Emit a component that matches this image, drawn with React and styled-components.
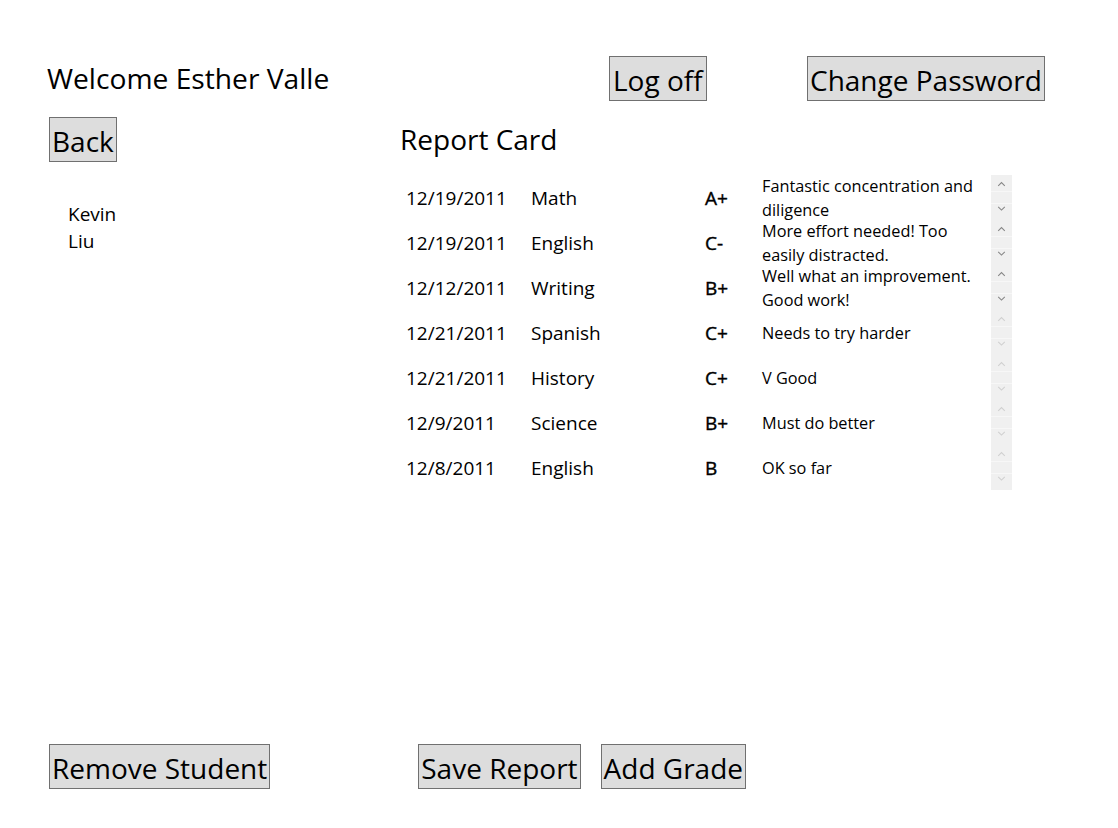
import React from "react";
import styled, { createGlobalStyle } from "styled-components";

const GlobalStyle = createGlobalStyle`
  html, body {
    margin: 0;
    padding: 0;
    background: #ffffff;
  }
  body {
    font-family: "Open Sans", "Noto Sans", sans-serif;
    color: #000000;
  }
`;

const Page = styled.div`
  width: 1118px;
  height: 828px;
  box-sizing: border-box;
  padding: 56px 0 39px 0;
  display: flex;
  flex-direction: column;
`;

const TopBar = styled.div`
  display: grid;
  grid-template-columns: 562px 198px auto;
  align-items: start;
  padding-left: 47px;
`;

const Welcome = styled.h1`
  margin: 0;
  font-size: 28.2px;
  font-weight: 400;
  line-height: 45px;
`;

const Button = styled.button`
  font-family: "Open Sans", "Noto Sans", sans-serif;
  font-size: 28px;
  line-height: 38px;
  height: 45px;
  box-sizing: border-box;
  padding: 3px ${(p) => (p.$wide ? 3 : 2)}px 0;
  background: #dddddd;
  border: 1px solid #707070;
  border-radius: 0;
  color: #000000;
  cursor: pointer;
  justify-self: start;
  white-space: nowrap;
`;

const Main = styled.div`
  display: flex;
  margin-top: 16px;
`;

const LeftPane = styled.div`
  width: 351px;
  padding-left: 49px;
  display: flex;
  flex-direction: column;
  align-items: flex-start;
`;

const StudentList = styled.ul`
  list-style: none;
  margin: 39px 0 0 0;
  padding: 0 0 0 19px;
  width: 60px;
`;

const Student = styled.li`
  font-size: 19px;
  line-height: 27px;
`;

const RightPane = styled.div`
  display: flex;
  flex-direction: column;
`;

const Heading = styled.h2`
  margin: 0 0 13px 0;
  font-size: 28px;
  font-weight: 400;
  line-height: 45px;
`;

const Table = styled.div`
  display: flex;
  flex-direction: column;
  width: 612px;
`;

const Row = styled.div`
  display: grid;
  grid-template-columns: 125px 174px 57px 235px 21px;
  height: 45px;
  align-items: center;
`;

const Cell = styled.div`
  padding-left: 6px;
  font-size: 19px;
  white-space: nowrap;
  -webkit-text-stroke: ${(p) => (p.$strong ? "0.4px #000" : "0")};
`;

const Comment = styled.div`
  height: 45px;
  overflow: hidden;
  display: flex;
  align-items: center;
  padding-left: 6px;
  padding-right: 4px;
  font-size: 16.3px;
  line-height: 24px;
`;

const Scroll = styled.div`
  height: 45px;
  background: #f0f0f0;
  display: flex;
  flex-direction: column;
  justify-content: space-between;
  color: ${(p) => (p.$active ? "#868686" : "#d0d0d0")};
`;

const Arrow = styled.svg`
  width: 21px;
  height: 17px;
  display: block;
  box-sizing: border-box;
  border-bottom: ${(p) => (p.$top ? "1px solid #f7f7f7" : "none")};
  border-top: ${(p) => (p.$top ? "none" : "1px solid #f7f7f7")};
`;

const BottomBar = styled.div`
  margin-top: auto;
  display: flex;
  padding-left: 49px;
`;

const Spacer = styled.div`
  width: ${(p) => p.$w}px;
  flex: none;
`;

const grades = [
  { date: "12/19/2011", subject: "Math", grade: "A+", comment: "Fantastic concentration and diligence", scroll: true },
  { date: "12/19/2011", subject: "English", grade: "C-", comment: "More effort needed! Too easily distracted.", scroll: true },
  { date: "12/12/2011", subject: "Writing", grade: "B+", comment: "Well what an improvement. Good work!", scroll: true },
  { date: "12/21/2011", subject: "Spanish", grade: "C+", comment: "Needs to try harder" },
  { date: "12/21/2011", subject: "History", grade: "C+", comment: "V Good" },
  { date: "12/9/2011", subject: "Science", grade: "B+", comment: "Must do better" },
  { date: "12/8/2011", subject: "English", grade: "B", comment: "OK so far" },
];

function ScrollBar({ active }) {
  return (
    <Scroll $active={active}>
      <Arrow $top viewBox="0 0 21 17">
        <path d="M7 11.5 L10.5 8 L14 11.5" fill="none" stroke="currentColor" strokeWidth="1.1" />
      </Arrow>
      <Arrow viewBox="0 0 21 17">
        <path d="M7 3 L10.5 6.5 L14 3" fill="none" stroke="currentColor" strokeWidth="1.1" />
      </Arrow>
    </Scroll>
  );
}

export default function App() {
  return (
    <Page>
      <GlobalStyle />
      <TopBar>
        <Welcome>Welcome Esther Valle</Welcome>
        <Button $wide>Log off</Button>
        <Button>Change Password</Button>
      </TopBar>
      <Main>
        <LeftPane>
          <Button>Back</Button>
          <StudentList>
            <Student>Kevin Liu</Student>
          </StudentList>
        </LeftPane>
        <RightPane>
          <Heading>Report Card</Heading>
          <Table>
            {grades.map((g, i) => (
              <Row key={i}>
                <Cell>{g.date}</Cell>
                <Cell>{g.subject}</Cell>
                <Cell $strong>{g.grade}</Cell>
                <Comment>{g.comment}</Comment>
                <ScrollBar active={g.scroll} />
              </Row>
            ))}
          </Table>
        </RightPane>
      </Main>
      <BottomBar>
        <Button>Remove Student</Button>
        <Spacer $w={148} />
        <Button>Save Report</Button>
        <Spacer $w={20} />
        <Button>Add Grade</Button>
      </BottomBar>
    </Page>
  );
}
